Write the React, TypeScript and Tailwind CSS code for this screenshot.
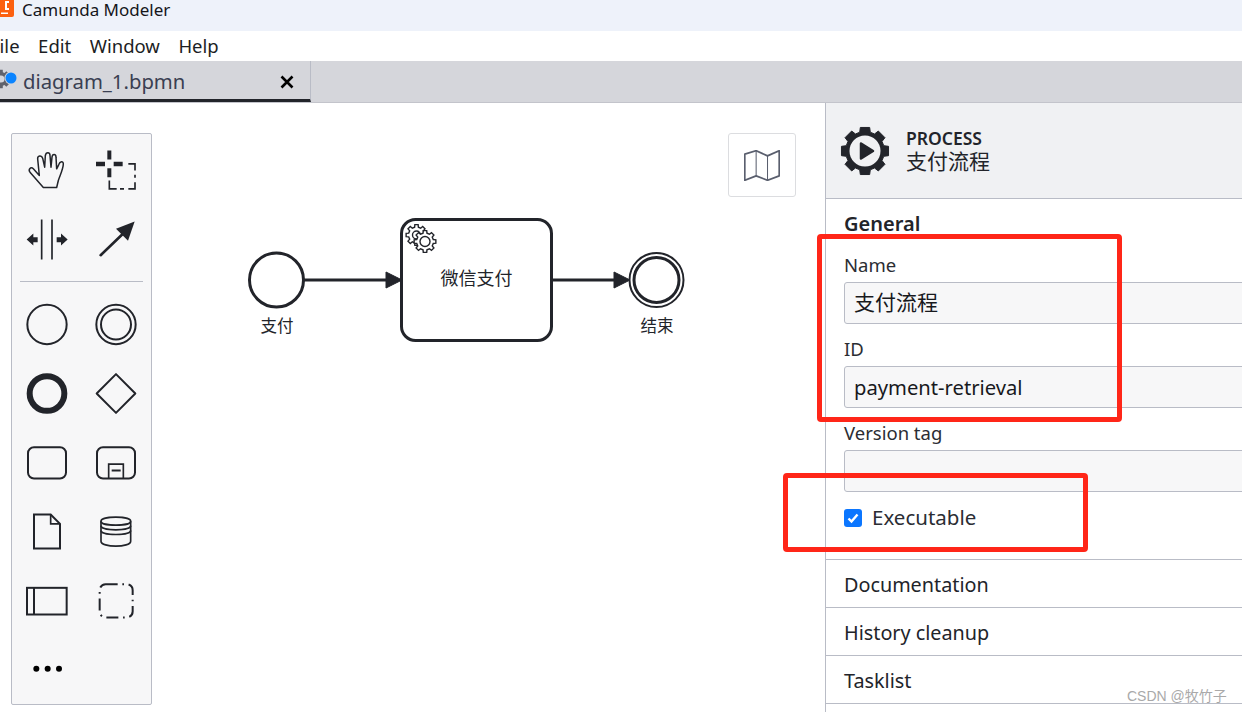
import React from "react";

const INK = "#22242a";

function gearPath(cx: number, cy: number, ro: number, ri: number, teeth: number, fat = 0): string {
  const pts: string[] = [];
  const step = (Math.PI * 2) / teeth;
  for (let i = 0; i < teeth; i++) {
    const a = i * step - Math.PI / 2;
    const w = step * (0.2 + fat);
    const w2 = step * (0.3 + fat);
    const p = (r: number, t: number) => `${(cx + r * Math.cos(t)).toFixed(2)} ${(cy + r * Math.sin(t)).toFixed(2)}`;
    pts.push(p(ri, a - w2), p(ro, a - w), p(ro, a + w), p(ri, a + w2));
  }
  return "M" + pts.join("L") + "Z";
}

function Cell({ vb, children }: { vb: string; children: React.ReactNode }) {
  return (
    <svg viewBox={vb} className="w-[69px] h-[69px] block" fill="none" stroke={INK} strokeWidth={6}>
      {children}
    </svg>
  );
}

function Palette() {
  return (
    <div className="absolute left-[11px] top-[30px] w-[141px] h-[572px] bg-[#f7f7f8] border border-[#b9bcc6] rounded-[2px] pt-[2px]">
      <div className="grid grid-cols-[69px_69px]">
        <Cell vb="36 31.5 207 207">
          <path strokeWidth={4.5} strokeLinejoin="round" d="M130 186 L170 186 L175 165 C180 150 190 130 190 115 C190 106 180 106 176 118 L170 130 L168 95 C168 84 157 84 156 95 L153 125 L150 90 C150 79 138 79 136 90 L134 125 L128 98 C125 88 112 90 113 100 L118 150 L100 130 C92 122 84 132 90 140 Z" />
        </Cell>
        <Cell vb="243 31.5 207 207">
          <path stroke="none" fill={INK} d="M322 75h12v27h-12zM322 128h12v27h-12zM288 109h27v13h-27zM341 109h27v13h-27z" />
          <path strokeWidth={5} d="M385 115H405V135M405 148V157M405 170V190H385M372 190H360M350 190H328V165" />
        </Cell>
        <Cell vb="36 238.5 207 207">
          <path strokeWidth={5} d="M125 282V402M156 282V402" />
          <path stroke="none" fill={INK} d="M80 342L100 324V335H113V350H100V360ZM203 342L183 324V335H170V350H183V360Z" />
        </Cell>
        <Cell vb="243 238.5 207 207">
          <path strokeWidth={8} strokeLinecap="round" d="M302 389L372 322" />
          <path stroke="none" fill={INK} d="M404 288L384 346L348 310Z" />
        </Cell>
      </div>
      <div className="h-px bg-[#b9bcc6] mx-[8px] mt-[7px] mb-[8px]" />
      <div className="grid grid-cols-[69px_69px]">
        <Cell vb="36 493.5 207 207">
          <circle cx="141" cy="597" r="59" />
        </Cell>
        <Cell vb="243 493.5 207 207">
          <circle cx="348" cy="597" r="59" />
          <circle cx="348" cy="597" r="45" />
        </Cell>
        <Cell vb="36 700.5 207 207">
          <circle cx="141" cy="804" r="52" strokeWidth={18} />
        </Cell>
        <Cell vb="243 700.5 207 207">
          <path strokeLinejoin="round" d="M348 746L406 804L348 862L290 804Z" />
        </Cell>
        <Cell vb="36 22.5 207 207">
          <rect x="84" y="80" width="114" height="94" rx="18" />
        </Cell>
        <Cell vb="243 22.5 207 207">
          <rect x="291" y="80" width="114" height="94" rx="18" />
          <path strokeWidth={5} d="M326 174V131H370V174" />
          <path d="M335 150H362" />
        </Cell>
        <Cell vb="36 229.5 207 207">
          <path d="M102 282H152L180 310V384H102Z" />
          <path strokeWidth={5} d="M152 282V310H180" />
        </Cell>
        <Cell vb="243 229.5 207 207">
          <path strokeWidth={5} d="M303 302C303 286 392 286 392 302V362C392 382 303 382 303 362Z" />
          <path strokeWidth={5} d="M303 302C303 318 392 318 392 302M303 316C303 332 392 332 392 316M303 330C303 346 392 346 392 330" />
        </Cell>
        <Cell vb="36 436.5 207 207">
          <rect x="81" y="502" width="119" height="80" />
          <path d="M102 502V582" />
        </Cell>
        <Cell vb="243 436.5 207 207">
          <rect x="299" y="491" width="99" height="100" rx="18" strokeDasharray="36 14 5 14" />
        </Cell>
        <Cell vb="36 643.5 207 207">
          <g fill="#000" stroke="none">
            <circle cx="109" cy="745" r="9" />
            <circle cx="143" cy="745" r="9" />
            <circle cx="177" cy="745" r="9" />
          </g>
        </Cell>
      </div>
    </div>
  );
}

function Diagram() {
  return (
    <svg className="absolute left-0 top-0 w-[825px] h-[609px]" viewBox="0 103 825 609" fill="none" stroke={INK}>
      <circle cx="276.5" cy="280" r="27" strokeWidth="3" />
      <path d="M304 280H388" strokeWidth="3" />
      <path d="M386 272L402 280L386 288Z" fill={INK} strokeWidth="1" />
      <rect x="401.5" y="219.5" width="150" height="121" rx="14" strokeWidth="3" />
      <path d="M552 280H616" strokeWidth="3" />
      <path d="M614 272L630 280L614 288Z" fill={INK} strokeWidth="1" />
      <circle cx="656.5" cy="280" r="27" strokeWidth="2" />
      <circle cx="656.5" cy="280" r="22.5" strokeWidth="3" />
      <path d={gearPath(416.5, 235, 10.5, 8, 8)} fill="#fff" strokeWidth="1.4" />
      <circle cx="416.5" cy="235" r="4" fill="#fff" strokeWidth="1.4" />
      <path d={gearPath(425, 241.5, 11, 8.5, 8)} fill="#fff" strokeWidth="1.4" />
      <circle cx="425" cy="241.5" r="5" fill="#fff" strokeWidth="1.4" />
      <g fill={INK} stroke="none" fontFamily="'Noto Sans CJK SC', sans-serif" textAnchor="middle">
        <text x="476.5" y="285" fontSize="18">微信支付</text>
        <text x="277" y="332" fontSize="16.5">支付</text>
        <text x="657" y="332" fontSize="16.5">结束</text>
      </g>
    </svg>
  );
}

function Field({ label, value, cjk }: { label: string; value?: string; cjk?: boolean }) {
  return (
    <div className="flex flex-col">
      <div className="h-[32px] flex items-center pb-[2px] text-[18.5px] text-[#2b2d33]">{label}</div>
      <div className={`h-[42px] bg-[#f7f7f8] border border-[#b9bcc6] rounded-[3px] -mr-[8px] pl-[9px] flex items-center text-[#18191d] ${cjk ? "text-[21px]" : "text-[20.2px]"}`}>
        {value}
      </div>
      <div className="h-[10px]" />
    </div>
  );
}

function Group({ label }: { label: string }) {
  return (
    <div className="h-[48px] border-b border-[#b9bcc6] pl-[18px] pt-[2px] flex items-center text-[19.8px] text-[#22242a]">{label}</div>
  );
}

function Panel() {
  return (
    <div className="flex-1 border-l border-[#b9bcc6] flex flex-col overflow-hidden">
      <div className="h-[96px] shrink-0 bg-[#f0f1f3] border-b border-[#b9bcc6] flex items-center pl-[14px] gap-[16px]">
        <svg width="50" height="50" viewBox="0 0 50 50" className="shrink-0">
          <path d={gearPath(25, 25, 24, 19.5, 8, 0.05)} fill={INK} stroke={INK} strokeWidth="1" strokeLinejoin="round" />
          <circle cx="25" cy="25" r="15.5" fill="#f0f1f3" />
          <path d="M21 17.5L33 25L21 32.5Z" fill={INK} stroke={INK} strokeWidth="2.5" strokeLinejoin="round" />
        </svg>
        <div className="flex flex-col mt-[-1px]">
          <div className="text-[17.5px] leading-[22px] font-semibold text-[#22242a]">PROCESS</div>
          <div className="text-[21px] leading-[24px] text-[#22242a]">支付流程</div>
        </div>
      </div>
      <div className="pl-[18px] h-[361px] shrink-0 border-b border-[#b9bcc6]">
        <div className="h-[51px] flex items-center pb-[1px] text-[20px] font-semibold text-[#22242a]">General</div>
        <Field label="Name" value="支付流程" cjk />
        <Field label="ID" value="payment-retrieval" />
        <Field label="Version tag" />
        <div className="flex items-center gap-[10px] h-[32px]">
          <span className="w-[18px] h-[18px] rounded-[3px] bg-[#0b76ff] flex items-center justify-center">
            <svg width="14" height="14" viewBox="0 0 14 14" fill="none" stroke="#fff" strokeWidth="2.4">
              <path d="M2.5 7.5L5.5 10.5L11.5 3.5" />
            </svg>
          </span>
          <span className="text-[20.5px] text-[#2b2d33] -mt-[2px]">Executable</span>
        </div>
      </div>
      <Group label="Documentation" />
      <Group label="History cleanup" />
      <Group label="Tasklist" />
    </div>
  );
}

export default function App() {
  return (
    <div className="relative w-[1242px] h-[712px] overflow-hidden bg-white flex flex-col font-['Noto_Sans','Noto_Sans_CJK_SC',sans-serif]">
      <div className="h-[31px] shrink-0 bg-[#eef2fa] flex items-start">
        <svg width="14" height="17" viewBox="0 0 14 17" className="shrink-0">
          <path d="M0 0H14V15Q14 17 12 17H0Z" fill="#fc6110" />
          <path d="M5 1H9V3H7V8H9V10H5Z" fill="#fff" />
          <path d="M1 12.5H8V14H1Z" fill="#fff" />
        </svg>
        <span className="ml-[8px] text-[17px] leading-[19px] text-[#15161a]">Camunda Modeler</span>
      </div>
      <div className="h-[30px] shrink-0 bg-white flex items-center text-[18.5px] text-[#1c1e24] -ml-[10px] gap-[18.5px]">
        <span>File</span>
        <span>Edit</span>
        <span>Window</span>
        <span>Help</span>
      </div>
      <div className="h-[42px] shrink-0 bg-[#d5d6db] flex border-b border-[#c3c4cb]">
        <div className="w-[311px] h-[41px] border-b-[3px] border-r border-b-[#22242a] border-r-[#b9bcc6] flex items-center relative">
          <svg width="24" height="30" viewBox="0 0 24 30" className="absolute left-0 top-[3px]">
            <path d={gearPath(1, 15, 9.5, 7, 8, 0.04)} fill="#5f626c" />
            <circle cx="1" cy="15" r="3.5" fill="#d5d6db" />
            <circle cx="11" cy="14" r="6.5" fill="#d5d6db" />
            <circle cx="11" cy="14" r="5.5" fill="#0b84ff" />
          </svg>
          <span className="ml-[23px] text-[20.3px] text-[#3a3f52] mt-[2px]">diagram_1.bpmn</span>
          <svg width="14" height="14" viewBox="0 0 14 14" className="absolute left-[280px] top-[14px]" stroke="#000" strokeWidth="2.6">
            <path d="M1.5 1.5L12.5 12.5M12.5 1.5L1.5 12.5" />
          </svg>
        </div>
      </div>
      <div className="flex-1 flex min-h-0">
        <div className="relative w-[825px] shrink-0 bg-white">
          <Diagram />
          <Palette />
          <button className="absolute left-[728px] top-[30px] w-[68px] h-[64px] bg-white border border-[#dcdde0] rounded-[3px] flex items-center justify-center">
            <svg width="36" height="31" viewBox="75 153 104 90" fill="none" stroke="#5a5f6e">
              <path strokeWidth="5" strokeLinejoin="round" d="M77 165L110 155L143 170L177 155V228L143 241L110 228L77 241Z" />
              <path strokeWidth="3" d="M110 155V228M143 170V241" />
            </svg>
          </button>
        </div>
        <Panel />
      </div>
      <div className="absolute left-[817px] top-[234px] w-[305px] h-[188px] border-[5px] border-[#ff2618] rounded-[4px]" />
      <div className="absolute left-[783px] top-[473px] w-[305px] h-[79px] border-[5px] border-[#ff2618] rounded-[4px]" />
      <div className="absolute left-[1127px] top-[687px] text-[14px] leading-[18px] text-[#a9a9a9] font-['Liberation_Sans','Noto_Sans_CJK_SC',sans-serif]">CSDN @牧竹子</div>
    </div>
  );
}
